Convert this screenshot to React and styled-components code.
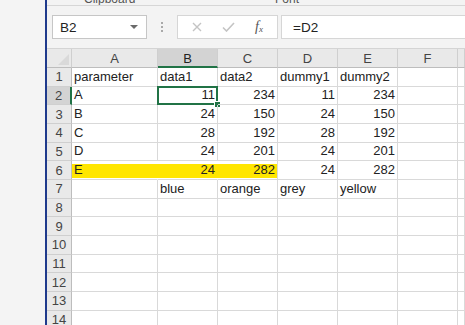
import React from 'react';
import styled, { createGlobalStyle, css } from 'styled-components';

const GlobalStyle = createGlobalStyle`
  html, body {
    margin: 0;
    padding: 0;
    background: #ffffff;
  }
  body {
    font-family: "Liberation Sans", Arial, sans-serif;
    width: 465px;
    height: 325px;
    overflow: hidden;
  }
`;

const Screen = styled.div`
  display: flex;
  width: 465px;
  height: 325px;
  overflow: hidden;
`;

const SidePane = styled.div`
  width: 45px;
  flex: none;
  background: #f4f4f4;
`;

const WindowEdge = styled.div`
  width: 2px;
  flex: none;
  background: #1f3a8c;
`;

const Workbook = styled.div`
  flex: 1;
  display: flex;
  flex-direction: column;
  min-width: 0;
  background: #f3f3f3;
`;

const RibbonStrip = styled.div`
  flex: none;
  height: 5px;
  display: flex;
  align-items: flex-end;
  overflow: hidden;
  border-bottom: 1px solid #d6d6d6;
  color: #555;
  font-size: 12px;
  line-height: 12px;
`;

const GroupLabel = styled.span`
  position: relative;
  left: ${(p) => p.left}px;
  width: 0;
  white-space: nowrap;
`;

const FormulaBar = styled.div`
  flex: none;
  height: 42px;
  display: flex;
  align-items: center;
  padding: 0 0 0 5px;
`;

const NameBox = styled.div`
  width: 95px;
  height: 24px;
  display: flex;
  align-items: center;
  justify-content: space-between;
  padding: 0 8px 0 7px;
  box-sizing: border-box;
  background: #ffffff;
  border: 1px solid #c6c6c6;
  font-size: 13.5px;
  color: #222;
`;

const Caret = styled.span`
  width: 0;
  height: 0;
  border-left: 4px solid transparent;
  border-right: 4px solid transparent;
  border-top: 4px solid #6a6a6a;
`;

const Grip = styled.div`
  width: 30px;
  display: flex;
  flex-direction: column;
  align-items: center;
  gap: 2px;
  span {
    width: 2px;
    height: 2px;
    background: #a9a9a9;
  }
`;

const FuncBox = styled.div`
  width: 101px;
  height: 24px;
  display: flex;
  align-items: center;
  justify-content: space-around;
  padding: 0 4px;
  box-sizing: border-box;
  background: #ffffff;
  border: 1px solid #d6d6d6;
`;

const Fx = styled.span`
  font-family: "Liberation Serif", "Times New Roman", serif;
  font-style: italic;
  font-size: 14px;
  color: #555;
  sub {
    font-size: 9px;
    vertical-align: -1px;
  }
`;

const FormulaInput = styled.div`
  flex: 1;
  height: 24px;
  box-sizing: border-box;
  margin-left: 3px;
  display: flex;
  align-items: center;
  padding-left: 11px;
  background: #ffffff;
  border: 1px solid #d6d6d6;
  border-right: none;
  font-size: 13.5px;
  color: #222;
`;

const Sheet = styled.div`
  flex: 1;
  display: grid;
  grid-template-columns: 25px 86px 60px 60px 60px 60px 60px 1fr;
  grid-template-rows: 19px;
  grid-auto-rows: 18.67px;
  background: #ffffff;
  border-top: 1px solid #d4d4d4;
  font-size: 13px;
`;

const Corner = styled.div`
  background: #e9e9e9;
  border-right: 1px solid #cfcfcf;
  border-bottom: 1px solid #bdbdbd;
  display: flex;
  align-items: flex-end;
  justify-content: flex-end;
  padding: 0 2px 2px 0;
  &::after {
    content: "";
    width: 0;
    height: 0;
    border-left: 11px solid transparent;
    border-bottom: 11px solid #d9d9d9;
  }
`;

const ColHead = styled.div`
  display: flex;
  align-items: center;
  justify-content: center;
  background: ${(p) => (p.active ? '#d3d3d3' : '#e9e9e9')};
  border-right: 1px solid #cfcfcf;
  border-bottom: ${(p) => (p.active ? '2px solid #217346' : '1px solid #bdbdbd')};
  color: ${(p) => (p.active ? '#222' : '#444')};
  padding-top: 1px;
`;

const RowHead = styled.div`
  display: flex;
  align-items: center;
  justify-content: center;
  background: ${(p) => (p.active ? '#d3d3d3' : '#e9e9e9')};
  border-bottom: 1px solid #cfcfcf;
  border-right: ${(p) => (p.active ? '2px solid #217346' : '1px solid #bdbdbd')};
  color: #444;
  box-sizing: border-box;
`;

const Cell = styled.div`
  position: relative;
  display: flex;
  align-items: flex-end;
  justify-content: ${(p) => (p.num ? 'flex-end' : 'flex-start')};
  padding: 0 2px 1px 2px;
  border-right: 1px solid #d9d9d9;
  border-bottom: 1px solid #d9d9d9;
  color: #222;
  white-space: nowrap;
  overflow: visible;
  line-height: 16px;
  ${(p) =>
    p.fill &&
    css`
      background: linear-gradient(
        transparent 3px,
        #ffe600 3px,
        #ffe600 calc(100% - 1px),
        transparent calc(100% - 1px)
      );
      border-right-color: ${p.fillEnd ? '#d9d9d9' : 'transparent'};
    `}
  ${(p) =>
    p.selected &&
    css`
      &::before {
        content: "";
        position: absolute;
        inset: -1px -1px -1px -1px;
        border: 2px solid #217346;
        pointer-events: none;
      }
      &::after {
        content: "";
        position: absolute;
        right: -4px;
        bottom: -4px;
        width: 5px;
        height: 5px;
        background: #217346;
        border: 1px solid #ffffff;
      }
    `}
`;

const columns = ['A', 'B', 'C', 'D', 'E', 'F', ''];

const data = [
  ['parameter', 'data1', 'data2', 'dummy1', 'dummy2'],
  ['A', 11, 234, 11, 234],
  ['B', 24, 150, 24, 150],
  ['C', 28, 192, 28, 192],
  ['D', 24, 201, 24, 201],
  ['E', 24, 282, 24, 282],
  ['', 'blue', 'orange', 'grey', 'yellow'],
];

const TOTAL_ROWS = 14;

function Check() {
  return (
    <svg width="13" height="10" viewBox="0 0 13 10">
      <path d="M1 5.5 L4.5 9 L12 1" fill="none" stroke="#c4c4c4" strokeWidth="1.6" />
    </svg>
  );
}

function Cross() {
  return (
    <svg width="10" height="10" viewBox="0 0 10 10">
      <path d="M1 1 L9 9 M9 1 L1 9" fill="none" stroke="#c4c4c4" strokeWidth="1.4" />
    </svg>
  );
}

export default function App() {
  const rows = [];
  for (let r = 1; r <= TOTAL_ROWS; r++) {
    const values = data[r - 1] || [];
    rows.push(
      <RowHead key={`h${r}`} active={r === 2}>
        {r}
      </RowHead>
    );
    columns.forEach((col, c) => {
      const v = values[c];
      rows.push(
        <Cell
          key={`${r}-${c}`}
          num={typeof v === 'number'}
          fill={r === 6 && c <= 2}
          fillEnd={r === 6 && c === 2}
          selected={r === 2 && c === 1}
        >
          {v}
        </Cell>
      );
    });
  }

  return (
    <>
      <GlobalStyle />
      <Screen>
        <SidePane />
        <WindowEdge />
        <Workbook>
          <RibbonStrip>
            <GroupLabel left={37}>Clipboard</GroupLabel>
            <GroupLabel left={228}>Font</GroupLabel>
          </RibbonStrip>
          <FormulaBar>
            <NameBox>
              B2
              <Caret />
            </NameBox>
            <Grip>
              <span />
              <span />
              <span />
            </Grip>
            <FuncBox>
              <Cross />
              <Check />
              <Fx>
                f<sub>x</sub>
              </Fx>
            </FuncBox>
            <FormulaInput>=D2</FormulaInput>
          </FormulaBar>
          <Sheet>
            <Corner />
            {columns.map((c, i) => (
              <ColHead key={i} active={c === 'B'}>
                {c}
              </ColHead>
            ))}
            {rows}
          </Sheet>
        </Workbook>
      </Screen>
    </>
  );
}
